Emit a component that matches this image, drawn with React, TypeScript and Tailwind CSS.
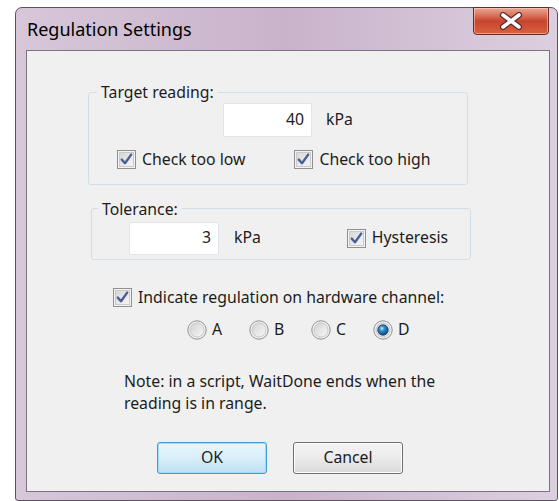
import React from "react";

const font = { fontFamily: '"Noto Sans", "Open Sans", sans-serif' };

const CheckBox = ({ checked = true }: { checked?: boolean }) => (
  <svg width="19" height="19" viewBox="0 0 19 19" className="shrink-0">
    <defs>
      <linearGradient id="cbFill" x1="0" y1="0" x2="1" y2="1">
        <stop offset="0" stopColor="#d6d6d6" />
        <stop offset="1" stopColor="#f7f7f7" />
      </linearGradient>
    </defs>
    <rect x="0.5" y="0.5" width="18" height="18" fill="#f4f4f4" stroke="#8f8f8f" />
    <rect x="2.5" y="2.5" width="14" height="14" fill="url(#cbFill)" stroke="#c9c9c9" />
    {checked && (
      <path
        d="M4.8 9.6 L8 13.2 L14.2 4.6"
        fill="none"
        stroke="#4b5f97"
        strokeWidth="2.4"
        strokeLinecap="round"
        strokeLinejoin="round"
      />
    )}
  </svg>
);

const Radio = ({ checked = false }: { checked?: boolean }) => (
  <svg width="20" height="20" viewBox="0 0 20 20" className="shrink-0">
    <defs>
      <linearGradient id="rdFill" x1="0" y1="0" x2="1" y2="1">
        <stop offset="0" stopColor="#d2d2d2" />
        <stop offset="1" stopColor="#f8f8f8" />
      </linearGradient>
      <radialGradient id="rdDot" cx="0.4" cy="0.35" r="0.7">
        <stop offset="0" stopColor="#b9ecff" />
        <stop offset="0.35" stopColor="#2f8fd0" />
        <stop offset="1" stopColor="#0c3f73" />
      </radialGradient>
    </defs>
    <circle cx="10" cy="10" r="9.2" fill="#f2f2f2" stroke="#8e8e8e" strokeWidth="1" />
    <circle cx="10" cy="10" r="7" fill="url(#rdFill)" stroke="#c6c6c6" strokeWidth="1" />
    {checked && (
      <circle cx="10" cy="10" r="5.2" fill="url(#rdDot)" stroke="#1b3a63" strokeWidth="0.8" />
    )}
  </svg>
);

const Check = ({ label, className = "" }: { label: string; className?: string }) => (
  <div className={`flex items-center gap-[6px] ${className}`}>
    <CheckBox />
    <span>{label}</span>
  </div>
);

const Option = ({ label, checked }: { label: string; checked?: boolean }) => (
  <div className="w-[62px] flex items-center gap-[5px]">
    <Radio checked={checked} />
    <span>{label}</span>
  </div>
);

const NumberBox = ({ value, className = "" }: { value: string; className?: string }) => (
  <div
    className={`flex items-center justify-end bg-white border border-[#dfe4ea] rounded-[2px] pr-[7px] ${className}`}
  >
    {value}
  </div>
);

export default function App() {
  return (
    <div
      className="w-[559px] h-[501px] bg-white pt-[7px] pl-[15px] text-[15.8px] text-[#1c1c1c]"
      style={font}
    >
      {/* window frame */}
      <div className="w-[543px] h-[494px] flex flex-col border border-[#5b5160] rounded-t-[7px] rounded-b-[3px] bg-gradient-to-r from-[#d7c7d9] via-[#c9b3cb] to-[#dccfdf]">
        {/* title bar */}
        <div className="h-[42px] flex items-start justify-between pl-[11px] pr-[8px]">
          <span className="mt-[9px] text-[18px] leading-[24px] text-black">Regulation Settings</span>
          <div className="-mt-[1px] w-[76px] h-[28px] flex items-center justify-center rounded-b-[4px] border border-[#6b2b24] bg-gradient-to-b from-[#e9a794] via-[#c9432f] to-[#d8623f] shadow-[inset_0_0_0_1px_rgba(255,220,210,0.5)]">
            <svg width="28" height="18" viewBox="0 0 28 18">
              <path d="M6 3 L22 15 M22 3 L6 15" stroke="#5a2a26" strokeWidth="6" strokeLinecap="round" />
              <path d="M6 3 L22 15 M22 3 L6 15" stroke="#ffffff" strokeWidth="3.6" strokeLinecap="round" />
            </svg>
          </div>
        </div>

        {/* client area */}
        <div className="flex-1 ml-[10px] mr-[7px] mb-[8px] border border-[#7a7380] bg-[#f0f0f0] flex flex-col">
          <fieldset className="mt-[31px] ml-[61px] w-[380px] border border-[#d5dde4] rounded-[3px] pb-[12px]">
            <legend className="ml-[8px] px-[4px] leading-[20px]">Target reading:</legend>
            <div className="flex items-center mt-[1px] ml-[134px]">
              <NumberBox value="40" className="w-[89px] h-[34px]" />
              <span className="ml-[14px]">kPa</span>
            </div>
            <div className="flex mt-[11px] ml-[28px]">
              <Check label="Check too low" />
              <Check label="Check too high" className="ml-[49px]" />
            </div>
          </fieldset>

          <fieldset className="mt-[14px] ml-[64px] w-[380px] border border-[#d5dde4] rounded-[3px] pb-[4px]">
            <legend className="ml-[6px] px-[4px] leading-[20px]">Tolerance:</legend>
            <div className="flex items-center mt-[3px] ml-[37px]">
              <NumberBox value="3" className="w-[90px] h-[33px]" />
              <span className="ml-[15px]">kPa</span>
              <Check label="Hysteresis" className="ml-[86px]" />
            </div>
          </fieldset>

          <Check label="Indicate regulation on hardware channel:" className="mt-[26px] ml-[86px]" />

          <div className="flex mt-[9px] ml-[160px]">
            <Option label="A" />
            <Option label="B" />
            <Option label="C" />
            <Option label="D" checked />
          </div>

          <p className="mt-[28px] ml-[97px] w-[322px] leading-[22px]">
            Note: in a script, WaitDone ends when the reading is in range.
          </p>

          <div className="flex mt-[28px] ml-[130px] gap-[26px]">
            <button className="w-[110px] h-[32px] rounded-[3px] border border-[#3c9fd9] bg-gradient-to-b from-[#eaf6fd] via-[#d9eefa] to-[#bfe0f3] shadow-[inset_0_0_0_1px_#9edcf8]">
              OK
            </button>
            <button className="w-[110px] h-[32px] rounded-[3px] border border-[#707070] bg-gradient-to-b from-[#f4f4f4] via-[#ebebeb] to-[#d9d9d9] shadow-[inset_0_0_0_1px_#fcfcfc]">
              Cancel
            </button>
          </div>
        </div>
      </div>
    </div>
  );
}
